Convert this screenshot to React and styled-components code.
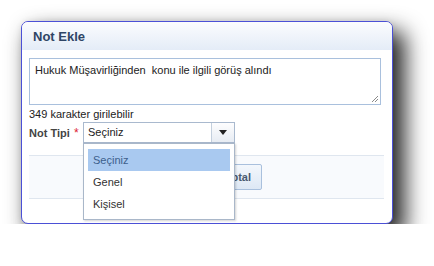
import React from 'react'
import styled, { createGlobalStyle } from 'styled-components'

const GlobalStyle = createGlobalStyle`
  html, body {
    margin: 0;
    padding: 0;
    background: #ffffff;
    font-family: "Liberation Sans", Arial, sans-serif;
    font-size: 11px;
    color: #333;
  }
`

const Panel = styled.div`
  box-sizing: border-box;
  margin: 21px 0 0 21px;
  width: 372px;
  height: 203px;
  border: 1px solid #4b50d6;
  border-radius: 7px;
  background: #fff;
  box-shadow: 10px 12px 22px 2px rgba(0, 0, 0, 0.85), 0 0 6px rgba(0, 0, 0, 0.08);
`

const Header = styled.div`
  height: 28px;
  display: flex;
  align-items: center;
  padding-left: 11px;
  border-radius: 6px 6px 0 0;
  background: linear-gradient(#fbfcfe, #e4ecf7);
`

const Title = styled.h1`
  margin: 0;
  font-size: 13px;
  font-weight: bold;
  color: #2f4566;
`

const Body = styled.div`
  position: relative;
  padding: 8px 8px 0 7px;
`

const NoteArea = styled.div`
  box-sizing: border-box;
  position: relative;
  width: 352px;
  height: 47px;
  border: 1px solid #a9c0dd;
  padding: 5px 5px;
  line-height: 13px;
  color: #222;
`

const Grip = styled.svg`
  position: absolute;
  right: 1px;
  bottom: 1px;
`

const Counter = styled.div`
  margin-top: 2px;
  line-height: 14px;
  color: #222;
`

const FieldRow = styled.div`
  display: flex;
  align-items: center;
  height: 21px;
  margin-top: 1px;
`

const Label = styled.span`
  font-weight: bold;
  color: #444;
  width: 45px;
`

const Required = styled.span`
  color: #d23;
  width: 9px;
  font-size: 12px;
`

const SelectWrap = styled.div`
  position: relative;
`

const SelectBox = styled.div`
  box-sizing: border-box;
  display: flex;
  width: 152px;
  height: 21px;
  border: 1px solid #a9b9ce;
  background: #fff;
`

const SelectText = styled.div`
  flex: 1;
  padding-left: 4px;
  line-height: 19px;
  color: #222;
`

const ArrowButton = styled.div`
  width: 22px;
  border-left: 1px solid #c3cfdd;
  background: linear-gradient(#fdfdfe, #e7ecf3);
  display: flex;
  align-items: center;
  justify-content: center;
`

const Menu = styled.div`
  position: absolute;
  z-index: 5;
  top: 21px;
  left: 0;
  box-sizing: border-box;
  width: 152px;
  height: 77px;
  border: 1px solid #a9b7c9;
  background: #fff;
  box-shadow: 1px 1px 2px rgba(0, 0, 0, 0.18);
  padding: 5px 4px 0 4px;
`

const MenuItem = styled.div`
  height: 22px;
  line-height: 22px;
  padding-left: 5px;
  color: ${p => (p.$active ? '#3d5f8c' : '#333')};
  background: ${p => (p.$active ? '#a9c9f0' : 'transparent')};
`

const ButtonBar = styled.div`
  box-sizing: border-box;
  margin-top: 12px;
  width: 355px;
  height: 44px;
  border-top: 1px solid #dfe6ef;
  border-bottom: 1px solid #dfe6ef;
  background: #f8fafd;
  display: flex;
  align-items: center;
  justify-content: flex-end;
  gap: 6px;
  padding-right: 122px;
`

const Button = styled.button`
  box-sizing: border-box;
  height: 26px;
  padding: 0 10px;
  font-family: "Liberation Sans", Arial, sans-serif;
  font-size: 11px;
  font-weight: bold;
  color: #4a5a70;
  border: 1px solid #a9c0dd;
  border-radius: 2px;
  background: linear-gradient(#f3f7fc, #dde8f5);
`

export default function App() {
  return (
    <>
      <GlobalStyle />
      <Panel>
        <Header>
          <Title>Not Ekle</Title>
        </Header>
        <Body>
          <NoteArea>
            Hukuk Müşavirliğinden&nbsp; konu ile ilgili görüş alındı
            <Grip width="9" height="9" viewBox="0 0 9 9">
              <path d="M8 2 L2 8 M8 5 L5 8" stroke="#8a8a8a" strokeWidth="1" />
            </Grip>
          </NoteArea>
          <Counter>349 karakter girilebilir</Counter>
          <FieldRow>
            <Label>Not Tipi</Label>
            <Required>*</Required>
            <SelectWrap>
              <SelectBox>
                <SelectText>Seçiniz</SelectText>
                <ArrowButton>
                  <svg width="8" height="5" viewBox="0 0 8 5">
                    <path d="M0 0 H8 L4 5 Z" fill="#222" />
                  </svg>
                </ArrowButton>
              </SelectBox>
              <Menu>
                <MenuItem $active>Seçiniz</MenuItem>
                <MenuItem>Genel</MenuItem>
                <MenuItem>Kişisel</MenuItem>
              </Menu>
            </SelectWrap>
          </FieldRow>
          <ButtonBar>
            <Button>Kaydet</Button>
            <Button>İptal</Button>
          </ButtonBar>
        </Body>
      </Panel>
    </>
  )
}
